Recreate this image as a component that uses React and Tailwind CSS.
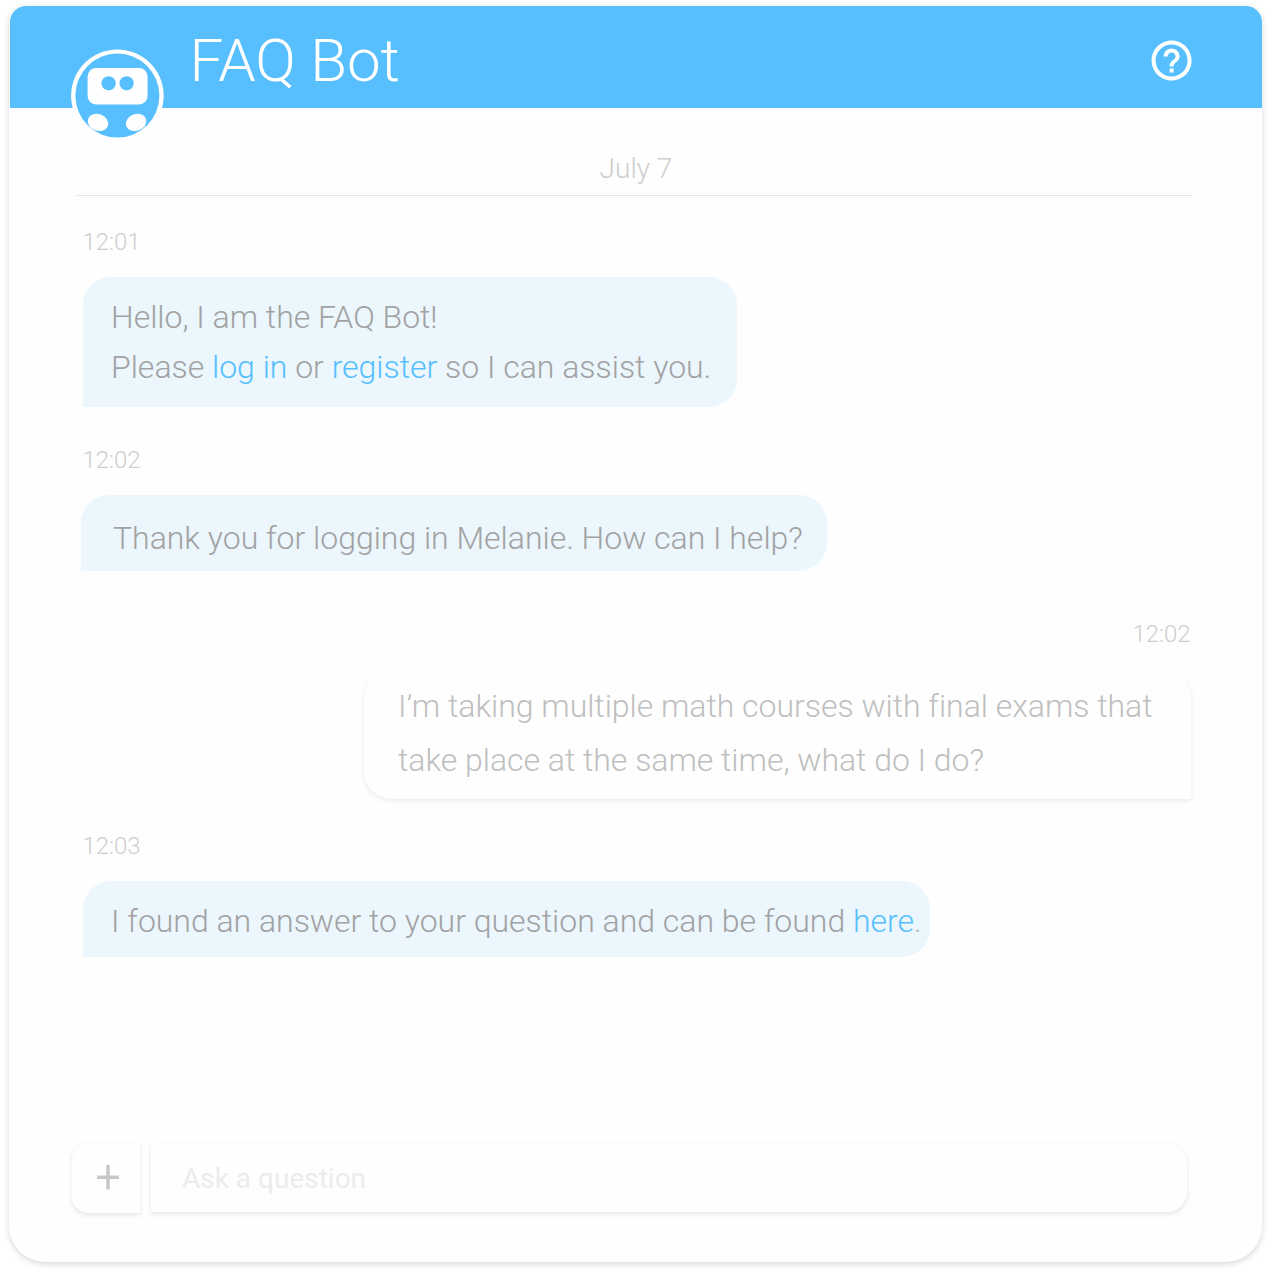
const FONT = "font-['Roboto','Liberation_Sans',sans-serif]";

function BotAvatar() {
  return (
    <svg className="block h-[94px] w-[94px]" viewBox="0 0 94 94" aria-hidden="true">
      <defs>
        <clipPath id="face">
          <circle cx="46.4" cy="46.6" r="42" />
        </clipPath>
      </defs>
      <circle cx="46.4" cy="46.8" r="46.3" fill="#fefefe" />
      <circle cx="46.4" cy="46.6" r="42" fill="#57bffe" />
      <g clipPath="url(#face)" fill="#fefefe">
        <rect x="16.6" y="19.1" width="60" height="36.4" rx="8.5" />
        <ellipse cx="27" cy="73.4" rx="10.5" ry="8.3" transform="rotate(20 27 73.4)" />
        <ellipse cx="65.1" cy="73.4" rx="10.5" ry="8.3" transform="rotate(-20 65.1 73.4)" />
      </g>
      <circle cx="37.6" cy="34.3" r="7.1" fill="#57bffe" />
      <circle cx="55.6" cy="34.3" r="7.1" fill="#57bffe" />
    </svg>
  );
}

function HelpIcon() {
  return (
    <svg className="block h-[49px] w-[49px]" viewBox="0 0 24.5 24.5" fill="white" aria-hidden="true">
      <path
        transform="translate(0.3 0.25)"
        d="M11 18h2v-2h-2v2zm1-16C6.48 2 2 6.48 2 12s4.48 10 10 10 10-4.48 10-10S17.52 2 12 2zm0 18c-4.41 0-8-3.59-8-8s3.59-8 8-8 8 3.59 8 8-3.59 8-8 8zm0-14c-2.21 0-4 1.79-4 4h2c0-1.1.9-2 2-2s2 .9 2 2c0 2-3 1.75-3 5h2c0-2.25 3-2.5 3-5 0-2.21-1.79-4-4-4z"
      />
    </svg>
  );
}

function Time({ children, className }) {
  return (
    <div className={`h-6 text-[24px] leading-6 font-light tracking-[-0.05px] whitespace-nowrap text-[#cecece] ${className}`}>
      {children}
    </div>
  );
}

function BotBubble({ children, className }) {
  return (
    <div
      className={`rounded-[28px] rounded-bl-none bg-[#ebf6fd] text-[32px] leading-[50px] font-light tracking-[-0.02px] whitespace-nowrap text-[#a2a2a2] ${className}`}
    >
      {children}
    </div>
  );
}

function Link({ children }) {
  return <a href="#" className="text-[#57bffe]">{children}</a>;
}

export default function App() {
  return (
    <div className={`flex h-[1274px] w-[1271px] flex-col overflow-hidden bg-white pt-[6px] pl-[9px] ${FONT}`}>
      <div className="flex h-[1256px] w-[1252.5px] flex-col rounded-t-[16px] rounded-b-[36px] bg-[#fefefe] shadow-[0_2px_6px_rgba(0,0,0,0.16)]">
        <header className="ml-px flex h-[102px] shrink-0 items-start rounded-t-[16px] bg-[#57bffe] pl-[61px]">
          <div className="mt-[43px]">
            <BotAvatar />
          </div>
          <h1 className="mt-[25px] ml-[24.5px] flex-1 text-[60px] leading-[60px] font-light tracking-[-0.1px] whitespace-nowrap text-white">
            FAQ Bot
          </h1>
          <div className="mt-[30px] mr-[65.5px]">
            <HelpIcon />
          </div>
        </header>

        <div className="mr-[68.5px] ml-[68px] flex h-[88px] shrink-0 items-end justify-center border-b border-[#e4e4e4] pb-[10px] pl-[2px] text-[28px] leading-[32px] font-light text-[#cecece]">
          July 7
        </div>

        <main className="flex flex-col items-start">
          <Time className="mt-[34px] ml-[73.5px]">12:01</Time>
          <BotBubble className="mt-[23px] ml-[74px] h-[130px] w-[654px] pt-[15px] pl-[28px]">
            <p>Hello, I am the FAQ Bot!</p>
            <p>
              Please <Link>log in</Link> or <Link>register</Link> so I can assist you.
            </p>
          </BotBubble>

          <Time className="mt-[41px] ml-[73.5px]">12:02</Time>
          <BotBubble className="mt-[23px] ml-[72px] h-[76px] w-[746px] pt-[18px] pl-[32px]">
            Thank you for logging in Melanie. How can I help?
          </BotBubble>

          <Time className="mt-[51px] mr-[71px] self-end">12:02</Time>
          <div className="mt-[23px] ml-[355px] h-[130px] w-[827px] rounded-[28px] rounded-br-none bg-[#fefefe] pt-[10px] pl-[34px] text-[32px] leading-[54px] font-light tracking-[-0.025px] whitespace-nowrap text-[#bfbfbf] shadow-[0_2px_5px_rgba(0,0,0,0.08)]">
            <p>I’m taking multiple math courses with final exams that</p>
            <p>take place at the same time, what do I do?</p>
          </div>

          <Time className="mt-[35px] ml-[73.5px]">12:03</Time>
          <BotBubble className="mt-[23px] ml-[74px] h-[76px] w-[847px] pt-[15px] pl-[28px]">
            I found an answer to your question and can be found <Link>here</Link>
            <span className="text-[#b8bdc0]">.</span>
          </BotBubble>
        </main>

        <footer className="mt-auto mb-[49px] ml-[63px] flex h-[70px] gap-[11px]">
          <button
            type="button"
            aria-label="Add attachment"
            className="flex w-[68px] items-center justify-center rounded-l-[16px] bg-[#fefefe] pl-1 shadow-[0_2px_5px_rgba(0,0,0,0.11)]"
          >
            <svg className="block h-[26px] w-[24px]" viewBox="0 0 24 26" aria-hidden="true">
              <path d="M12 0V24.5M1 12.3H23" stroke="#c7c7c7" strokeWidth="3.4" />
            </svg>
          </button>
          <div className="h-[69px] w-[1036px] rounded-r-[20px] bg-[#fefefe] pl-[31px] text-[28px] leading-[71px] whitespace-nowrap text-[#ececec] shadow-[0_2px_5px_rgba(0,0,0,0.11)]">
            Ask a question
          </div>
        </footer>
      </div>
    </div>
  );
}
